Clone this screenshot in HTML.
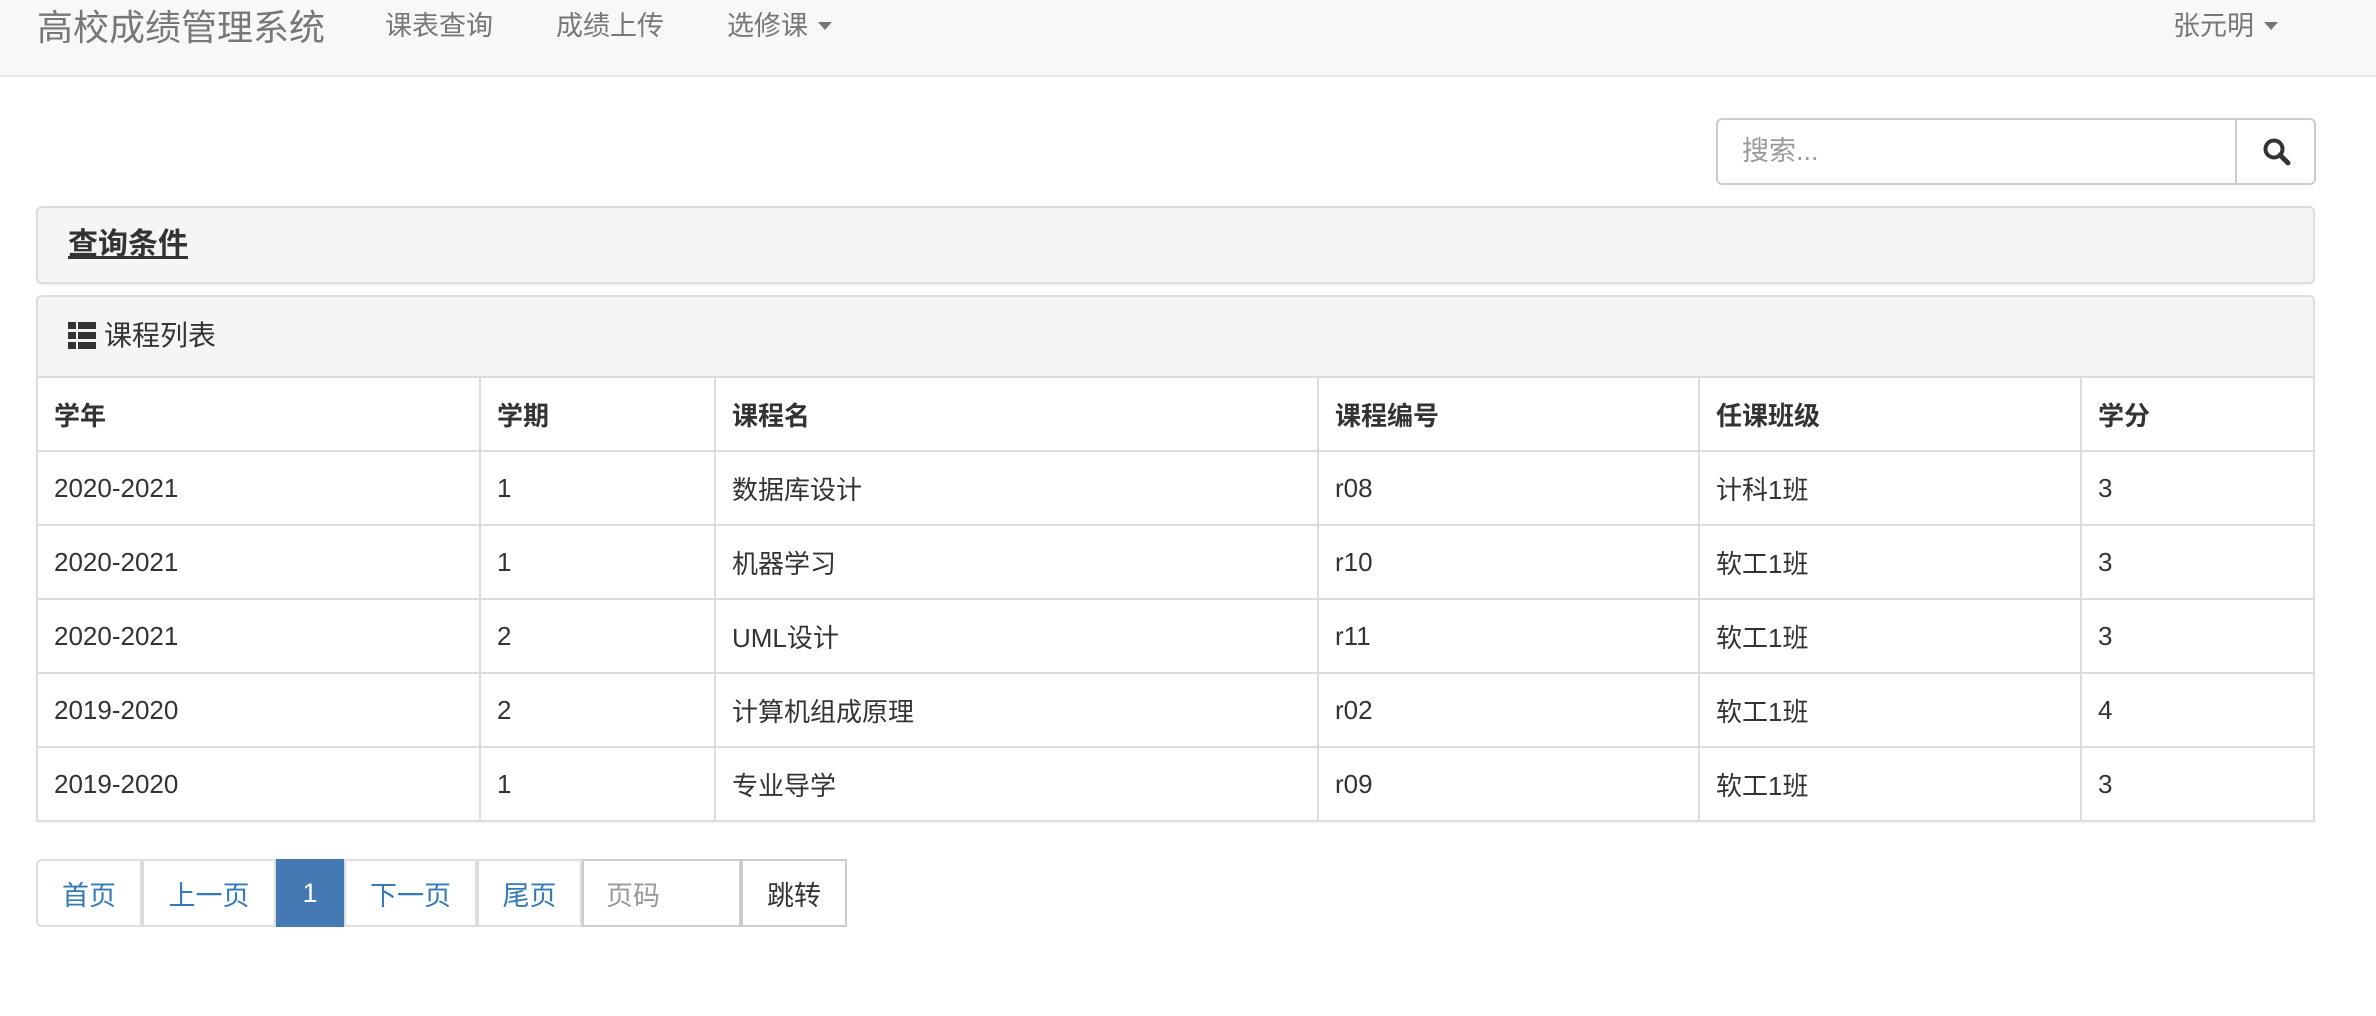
<!DOCTYPE html>
<html><head><meta charset="utf-8"><style>
*{box-sizing:border-box;margin:0;padding:0}
body{width:2376px;height:1016px;background:#fff;font-family:"Liberation Sans","Noto Sans CJK SC",sans-serif;color:#333;position:relative;overflow:hidden}
.abs{position:absolute;white-space:nowrap}
.nav{position:absolute;left:0;top:0;width:2376px;height:77px;background:#f8f8f8;border-bottom:2px solid #e7e7e7}
.nv{color:#777;font-size:27px;top:8px;line-height:36px}
.caret{display:inline-block;width:0;height:0;border-left:7px solid transparent;border-right:7px solid transparent;border-top:8px solid #777;vertical-align:middle;margin-left:10px;margin-top:-4px}
.panel{position:absolute;left:36px;width:2279px;border:2px solid #ddd;border-radius:6px;background:#f5f5f5;box-shadow:0 2px 2px rgba(0,0,0,.05)}
table{position:absolute;left:36px;top:376px;width:2279px;border-collapse:collapse;font-size:26px}
td,th{border:2px solid #ddd;height:74px;padding:0 16px;text-align:left;vertical-align:middle;background:#fff}
th{font-weight:bold}
.pg{position:absolute;top:859px;height:68px;border:2px solid #ddd;font-size:27px;color:#337ab7;display:flex;align-items:center;justify-content:center;margin-left:-2px}
</style></head><body>
<div class="nav"></div>
<div class="abs" style="left:37px;top:6px;font-size:36px;color:#777;line-height:44px">高校成绩管理系统</div>
<div class="abs nv" style="left:385px">课表查询</div>
<div class="abs nv" style="left:556px">成绩上传</div>
<div class="abs nv" style="left:727px">选修课<span class="caret"></span></div>
<div class="abs nv" style="left:2173px">张元明<span class="caret"></span></div>

<div class="abs" style="left:1716px;top:118px;width:600px;height:67px;border:2px solid #ccc;border-radius:6px;background:#fff"></div>
<div class="abs" style="left:2235px;top:118px;width:2px;height:67px;background:#ccc"></div>
<div class="abs" style="left:1742px;top:134px;font-size:27px;color:#999;line-height:34px">搜索...</div>
<svg class="abs" style="left:2262px;top:137px" width="30" height="30" viewBox="0 0 30 30"><circle cx="12" cy="12" r="8.5" fill="none" stroke="#333" stroke-width="4"/><path d="M18 18 L26 26" stroke="#333" stroke-width="5" stroke-linecap="round"/></svg>

<div class="panel" style="top:206px;height:78px"></div>
<div class="abs" style="left:68px;top:226px;font-size:30px;font-weight:bold;text-decoration:underline;line-height:38px">查询条件</div>

<div class="panel" style="top:295px;height:526px"></div>
<svg class="abs" style="left:68px;top:322px" width="28" height="27" viewBox="0 0 28 27"><g fill="#333"><rect x="0" y="0" width="8" height="7"/><rect x="10" y="0" width="18" height="7"/><rect x="0" y="10" width="8" height="7"/><rect x="10" y="10" width="18" height="7"/><rect x="0" y="20" width="8" height="7"/><rect x="10" y="20" width="18" height="7"/></g></svg>
<div class="abs" style="left:104px;top:318px;font-size:28px;line-height:36px">课程列表</div>

<table>
<colgroup><col style="width:443px"><col style="width:235px"><col style="width:603px"><col style="width:381px"><col style="width:382px"><col></colgroup>
<tr><th>学年</th><th>学期</th><th>课程名</th><th>课程编号</th><th>任课班级</th><th>学分</th></tr>
<tr><td>2020-2021</td><td>1</td><td>数据库设计</td><td>r08</td><td>计科1班</td><td>3</td></tr>
<tr><td>2020-2021</td><td>1</td><td>机器学习</td><td>r10</td><td>软工1班</td><td>3</td></tr>
<tr><td>2020-2021</td><td>2</td><td>UML设计</td><td>r11</td><td>软工1班</td><td>3</td></tr>
<tr><td>2019-2020</td><td>2</td><td>计算机组成原理</td><td>r02</td><td>软工1班</td><td>4</td></tr>
<tr><td>2019-2020</td><td>1</td><td>专业导学</td><td>r09</td><td>软工1班</td><td>3</td></tr>
</table>

<div class="pg" style="left:38px;width:106px;border-radius:6px 0 0 6px">首页</div>
<div class="pg" style="left:144px;width:134px">上一页</div>
<div class="pg" style="left:278px;width:68px;background:#4479b3;border-color:#4479b3;color:#fff">1</div>
<div class="pg" style="left:346px;width:133px">下一页</div>
<div class="pg" style="left:479px;width:105px">尾页</div>
<div class="pg" style="left:584px;width:159px;color:#999;justify-content:flex-start;padding-left:22px;border-color:#ccc">页码</div>
<div class="pg" style="left:743px;width:106px;color:#333;border-color:#ccc">跳转</div>
</body></html>
